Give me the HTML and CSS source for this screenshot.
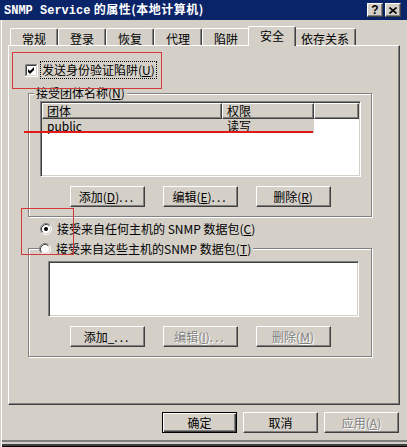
FILE: index.html
```html
<!DOCTYPE html>
<html lang="zh-CN">
<head>
    <meta charset="UTF-8">
    <title>SNMP Service 的属性(本地计算机)</title>
    <link rel="stylesheet" href="styles.css">
</head>
<body>

<div class="window">
    <div class="titlebar">
        <span class="title"><span class="mono">SNMP Service</span> 的属性(本地计算机)</span>
        <div class="caption-buttons">
            <span class="cap-btn help">?</span>
            <span class="cap-btn">
                <svg width="8" height="7" viewBox="0 0 8 7"><path d="M0.5 0.5L7.5 6.5M7.5 0.5L0.5 6.5" stroke="#000" stroke-width="1.6"/></svg>
            </span>
        </div>
    </div>

    <div class="tabs">
        <div class="tab">常规</div>
        <div class="tab">登录</div>
        <div class="tab">恢复</div>
        <div class="tab">代理</div>
        <div class="tab">陷阱</div>
        <div class="tab active">安全</div>
        <div class="tab">依存关系</div>
    </div>

    <div class="panel">
        <div class="check-row">
            <svg class="checkbox" width="13" height="13" viewBox="0 0 13 13">
                <rect width="13" height="13" fill="#fff"/>
                <path d="M0.5 12V0.5H12" stroke="#808080" fill="none"/>
                <path d="M1.5 11V1.5H11" stroke="#404040" fill="none"/>
                <path d="M0 12.5H12.5V0" stroke="#fff" fill="none"/>
                <path d="M1 11.5H11.5V1" stroke="#d4d0c8" fill="none"/>
                <path d="M3 5L5 7L9 3L9 6L5 10L3 8Z" fill="#000"/>
            </svg>
            <span class="focus">发送身份验证陷阱(<u>U</u>)</span>
        </div>

        <fieldset class="group">
            <legend>接受团体名称(<u>N</u>)</legend>
            <div class="listview">
                <div class="lv-header">
                    <span class="col col-name">团体</span>
                    <span class="col col-right">权限</span>
                    <span class="col col-fill"></span>
                </div>
                <div class="lv-row selected">
                    <span class="cell col-name">public</span>
                    <span class="cell col-right">读写</span>
                </div>
            </div>
            <div class="btn-row">
                <button class="btn">添加(<u>D</u>)<span class="dots">...</span></button>
                <button class="btn">编辑(<u>E</u>)<span class="dots">...</span></button>
                <button class="btn">删除(<u>R</u>)</button>
            </div>
        </fieldset>

        <div class="radio-row first">
            <svg class="radio" width="12" height="12" viewBox="0 0 12 12">
                <circle cx="6" cy="6" r="5" fill="#fff"/>
                <path d="M9.89 2.11A5.5 5.5 0 0 0 2.11 9.89" stroke="#808080" fill="none"/>
                <path d="M9.18 2.82A4.5 4.5 0 0 0 2.82 9.18" stroke="#404040" fill="none"/>
                <path d="M2.11 9.89A5.5 5.5 0 0 0 9.89 2.11" stroke="#fff" fill="none"/>
                <path d="M2.82 9.18A4.5 4.5 0 0 0 9.18 2.82" stroke="#d4d0c8" fill="none"/>
                <circle cx="6" cy="6" r="2" fill="#000"/>
            </svg>
            <span>接受来自任何主机的 SNMP 数据包(<u>C</u>)</span>
        </div>

        <fieldset class="group hosts">
            <legend>
                <span class="radio-row">
                    <svg class="radio" width="12" height="12" viewBox="0 0 12 12">
                        <circle cx="6" cy="6" r="5" fill="#fff"/>
                        <path d="M9.89 2.11A5.5 5.5 0 0 0 2.11 9.89" stroke="#808080" fill="none"/>
                        <path d="M9.18 2.82A4.5 4.5 0 0 0 2.82 9.18" stroke="#404040" fill="none"/>
                        <path d="M2.11 9.89A5.5 5.5 0 0 0 9.89 2.11" stroke="#fff" fill="none"/>
                        <path d="M2.82 9.18A4.5 4.5 0 0 0 9.18 2.82" stroke="#d4d0c8" fill="none"/>
                    </svg>
                    <span>接受来自这些主机的SNMP 数据包(<u>T</u>)</span>
                </span>
            </legend>
            <div class="listbox"></div>
            <div class="btn-row">
                <button class="btn">添加_<span class="dots">...</span></button>
                <button class="btn" disabled>编辑(<u>I</u>)<span class="dots">...</span></button>
                <button class="btn" disabled>删除(<u>M</u>)</button>
            </div>
        </fieldset>
    </div>

    <div class="dialog-buttons">
        <button class="btn default">确定</button>
        <button class="btn">取消</button>
        <button class="btn" disabled>应用(<u>A</u>)</button>
    </div>

    <!-- red hand-drawn marks -->
    <div class="mark mark-check"></div>
    <div class="mark-line"></div>
    <div class="mark mark-radio"></div>
</div>

</body>
</html>
```

FILE: styles.css
```css
* {
    box-sizing: border-box;
}

body {
    margin: 0;
    background-color: #d4d0c8;
    font-family: "Noto Sans CJK SC", "Noto Sans", sans-serif;
    font-size: 12px;
    color: #000;
}

.window {
    position: relative;
    width: 407px;
    height: 447px;
    overflow: hidden;
    background-color: #d4d0c8;
    box-shadow: inset 1px 0 #d4d0c8, inset 2px 0 #fff,
                inset 0 -1px #000, inset 0 -3px #404040,
                inset 0 -5px #d4d0c8, inset 0 -7px #808080;
}

/* title bar */
.titlebar {
    height: 20px;
    padding: 0 6px 0 4px;
    display: flex;
    align-items: center;
    justify-content: space-between;
    background-color: #0a246a;
    color: white;
    font-weight: bold;
    line-height: 14px;
}

.title {
    letter-spacing: 0.5px;
}

.mono {
    font-family: "Liberation Mono", monospace;
    letter-spacing: 0;
}

.caption-buttons {
    display: flex;
    gap: 2px;
}

.cap-btn {
    width: 16px;
    height: 14px;
    display: flex;
    align-items: center;
    justify-content: center;
    background-color: #d4d0c8;
    border: 1px solid;
    border-color: #fff #404040 #404040 #fff;
    box-shadow: inset -1px -1px #808080;
}

.cap-btn.help {
    color: #000;
    font-family: "Liberation Sans", sans-serif;
    font-size: 12px;
    font-weight: bold;
}

/* tabs */
.tabs {
    display: flex;
    align-items: flex-end;
    height: 19px;
    margin-top: 6px;
    padding-left: 10px;
}

.tab {
    height: 17px;
    min-width: 48px;
    padding: 2px 6px 0;
    text-align: center;
    line-height: 15px;
    background-color: #d4d0c8;
    border: 1px solid;
    border-color: #fff #404040 transparent #fff;
    border-bottom: none;
    border-radius: 2px 2px 0 0;
    box-shadow: inset -1px 0 #808080;
}

.tab.active {
    position: relative;
    z-index: 1;
    height: 20px;
    margin: 0 -2px -1px;
    padding-top: 1px;
}

/* property page */
.panel {
    margin-left: 8px;
    width: 392px;
    height: 360px;
    border: 1px solid;
    border-color: #fff #404040 #404040 #fff;
    box-shadow: inset -1px -1px #808080;
}

.check-row {
    display: flex;
    align-items: center;
    gap: 2px;
    height: 18px;
    margin: 15px 0 7px 16px;
}

.focus {
    border: 1px dotted #000;
    padding: 0 1px;
    line-height: 16px;
}

.group {
    margin: 0 0 0 19px;
    width: 344px;
    min-width: 0;
    padding: 0;
    border: 1px solid #808080;
    box-shadow: inset 1px 1px #fff, 1px 1px #fff;
}

.group legend {
    margin-left: 5px;
    padding: 0 2px;
    height: 14px;
    line-height: 14px;
    background-color: #d4d0c8;
}

.group.hosts legend {
    margin-left: 10px;
    padding: 0 2px 0 0;
}

.listview,
.listbox {
    background-color: white;
    border: 1px solid;
    border-color: #808080 #fff #fff #808080;
    box-shadow: inset 1px 1px #404040, inset -1px -1px #d4d0c8;
    padding: 1px;
}

.listview {
    margin: 1px 0 0 11px;
    width: 321px;
    height: 76px;
}

.lv-header {
    display: flex;
    height: 16px;
    background-color: #d4d0c8;
}

.lv-header .col {
    height: 16px;
    border: 1px solid;
    border-color: #fff #404040 #404040 #fff;
    box-shadow: inset -1px -1px #808080;
    padding-left: 4px;
    line-height: 13px;
}

.col-name {
    width: 180px;
}

.col-right {
    width: 92px;
}

.col-fill {
    flex: 1;
}

.lv-row {
    display: flex;
    height: 14px;
    line-height: 14px;
}

.lv-row .cell {
    padding-left: 5px;
}

.lv-row.selected .cell {
    background-color: #d4d0c8;
}

.listbox {
    margin: 6px 0 0 19px;
    width: 311px;
    height: 56px;
}

.btn-row {
    display: flex;
    justify-content: center;
    gap: 18px;
    margin: 9px 0 9px;
}

.btn {
    width: 75px;
    height: 21px;
    padding: 0;
    font: inherit;
    line-height: 17px;
    color: #000;
    text-align: center;
    background-color: #d4d0c8;
    border: 1px solid;
    border-color: #fff #404040 #404040 #fff;
    border-radius: 0;
    box-shadow: inset -1px -1px #808080;
}

.dots {
    letter-spacing: 2px;
}

.btn:disabled {
    color: #808080;
    text-shadow: 1px 1px #fff;
}

.btn.default {
    border-color: #000;
    box-shadow: inset 1px 1px #fff, inset -1px -1px #404040, inset -2px -2px #808080;
}

.radio-row {
    display: flex;
    align-items: center;
    gap: 5px;
    height: 16px;
    line-height: 14px;
}

.radio-row.first {
    margin: 4px 0 4px 31px;
}

.dialog-buttons {
    display: flex;
    justify-content: flex-end;
    gap: 6px;
    margin-top: 7px;
    padding-right: 8px;
}

/* red annotations drawn over the screenshot */
.mark {
    position: absolute;
    border: 1px solid #d23a3a;
}

.mark-check {
    left: 12px;
    top: 52px;
    width: 150px;
    height: 37px;
}

.mark-radio {
    left: 21px;
    top: 208px;
    width: 53px;
    height: 47px;
}

.mark-line {
    position: absolute;
    left: 24px;
    top: 131px;
    width: 289px;
    height: 2px;
    background-color: #e01818;
}
```
